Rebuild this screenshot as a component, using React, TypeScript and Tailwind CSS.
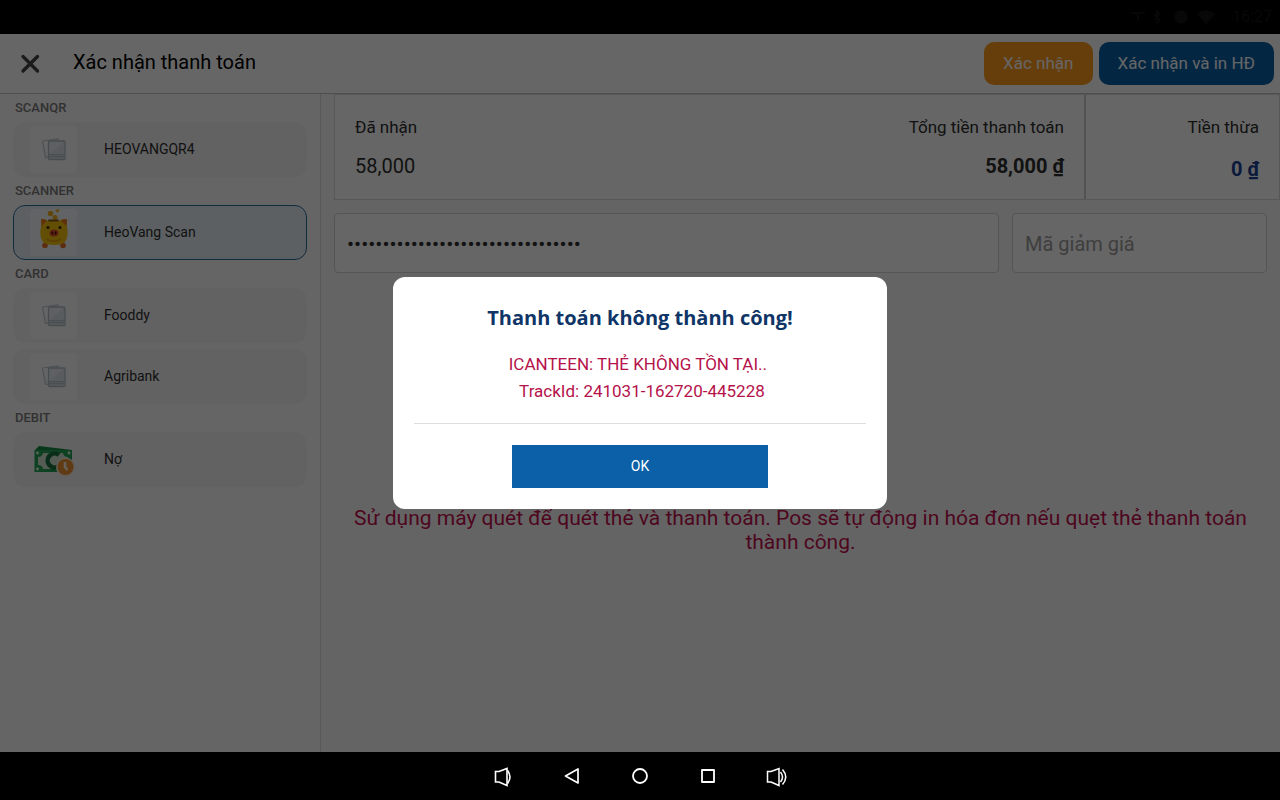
import { useState, type ReactNode } from "react";

function PhotoIcon() {
  return (
    <svg viewBox="0 0 47 47" className="size-[47px] rounded bg-[#fcfcfc]" aria-hidden="true">
      <path d="M12.500 15 28 13l.5 2M12.500 15l3 16.500 3-.5" fill="#f1f5f7" stroke="#c0cad1" strokeWidth="1.2" />
      <rect x="18.500" y="15" width="16.500" height="18.500" rx="1" fill="#dce5ea" stroke="#b2bec6" strokeWidth="1.3" />
      <path d="M19.500 28V16h14z" fill="#ebf1f4" />
      <path d="M19 28.500h15.500V33H19z" fill="#cfd9df" />
      <path d="M19 28.500h15.500M19 30.500h15.500" stroke="#b2bec6" strokeWidth=".8" />
    </svg>
  );
}

function PiggyIcon() {
  return (
    <svg viewBox="0 0 47 47" className="size-[47px] rounded bg-[#f4f8fb]" aria-hidden="true">
      <g fill="#f0b01c">
        <circle cx="20.500" cy="4.500" r="2.800" />
        <circle cx="25" cy="8.500" r="2.500" />
        <path d="m25 1 5-1-2.500 4z" />
      </g>
      <circle cx="15" cy="36.500" r="2.800" fill="#e8722c" />
      <circle cx="33" cy="36.500" r="2.800" fill="#e8722c" />
      <path d="M11 10.500c3-1 5 0 7 1.500h11c2-1.500 5-2.500 8-1.500v8c1.500 5 .5 11-2 14.500-4 4-18 4-22 0-2.500-3.500-3.500-9.500-2-14.500z" fill="#f8c20e" />
      <path d="M11 10.500c3-1 4 0 6 1.500l-5.500 5zM37 10.500c-3-1-4 0-6 1.500l5.500 5z" fill="#ee7e24" />
      <path d="M19 11.500h9" stroke="#8b5a10" strokeWidth="1.800" strokeLinecap="round" />
      <circle cx="18" cy="18.500" r="1.500" fill="#342408" />
      <circle cx="30" cy="18.500" r="1.500" fill="#342408" />
      <ellipse cx="24" cy="24" rx="4.500" ry="3.600" fill="#e9562b" />
      <ellipse cx="22.400" cy="24" rx="1" ry="1.700" fill="#4b1509" />
      <ellipse cx="25.600" cy="24" rx="1" ry="1.700" fill="#4b1509" />
      <path d="M17 30c3 3 11 3 14 0" fill="none" stroke="#e29a0c" strokeWidth="1.300" />
    </svg>
  );
}

function DebtIcon() {
  return (
    <svg viewBox="0 0 47 47" className="size-[47px]" aria-hidden="true">
      <path d="m5 14 4-4 33 4v8H5z" fill="#188a43" />
      <rect x="4.500" y="14" width="37.500" height="22" fill="#22a455" />
      <path d="M13 17h20a5 5 0 0 0 5 4v8a5 5 0 0 0-5 4H13a5 5 0 0 0-5-4v-8a5 5 0 0 0 5-4" fill="#cfe3cc" />
      <path d="M29 19a7 7 0 1 0 0 11" fill="none" stroke="#17703c" strokeWidth="4.500" />
      <g fill="#e9f2e6">
        <circle cx="7.500" cy="17" r="1.400" />
        <circle cx="39" cy="17" r="1.400" />
        <circle cx="7.500" cy="33" r="1.400" />
      </g>
      <circle cx="35.500" cy="31" r="9.500" fill="#f7eadc" />
      <circle cx="35.500" cy="31" r="8" fill="#ee9130" />
      <path d="M35 26v5l2.500 3" fill="none" stroke="#fdf3dc" strokeWidth="2.600" />
    </svg>
  );
}

type Method = { name: string; icon: ReactNode };

const groups: { title: string; methods: Method[] }[] = [
  { title: "SCANQR", methods: [{ name: "HEOVANGQR4", icon: <PhotoIcon /> }] },
  { title: "SCANNER", methods: [{ name: "HeoVang Scan", icon: <PiggyIcon /> }] },
  {
    title: "CARD",
    methods: [
      { name: "Fooddy", icon: <PhotoIcon /> },
      { name: "Agribank", icon: <PhotoIcon /> },
    ],
  },
  { title: "DEBIT", methods: [{ name: "Nợ", icon: <DebtIcon /> }] },
];

function StatusBar() {
  return (
    <div className="flex h-[34px] shrink-0 items-center justify-end gap-4 bg-black px-2 text-[#080808]">
      <svg viewBox="0 0 86 14" className="h-3.5 w-[86px]" fill="none" stroke="currentColor" strokeWidth="1.5" aria-hidden="true">
        <path d="M1 3h14M8 3v8M24 4l6 6-3 3V1l3 3-6 6" />
        <circle cx="51" cy="7" r="6" fill="currentColor" />
        <path d="M68 4q8-6 16 0l-8 9z" fill="currentColor" />
      </svg>
      <span className="text-[16px]">16:27</span>
    </div>
  );
}

function Header() {
  return (
    <header className="flex h-[60px] shrink-0 items-center border-b border-[#c4c4c4] bg-white pr-1.5 pl-5">
      <button type="button" aria-label="Đóng" className="mr-8 flex size-[21px] items-center justify-center">
        <svg viewBox="0 0 21 21" className="size-[21px]" stroke="#444444" strokeWidth="3.300" strokeLinecap="round" aria-hidden="true">
          <path d="m3 3.500 14.500 14.500M17.500 3.500 3 18" />
        </svg>
      </button>
      <h1 className="flex-1 pb-1 text-[20px] text-black">Xác nhận thanh toán</h1>
      <div className="flex gap-1.5 text-[17px] text-white">
        <button type="button" className="h-[43px] rounded-[10px] bg-[#ff9c1f] px-[19px]">
          Xác nhận
        </button>
        <button type="button" className="h-[43px] rounded-[10px] bg-[#0960a8] px-[19px]">
          Xác nhận và in HĐ
        </button>
      </div>
    </header>
  );
}

function Sidebar() {
  const [selected, setSelected] = useState("HeoVang Scan");
  return (
    <aside className="w-[321px] shrink-0 border-r border-[#dcdcdc] bg-[#fdfdfd] px-[13px]">
      {groups.map((group) => (
        <section key={group.title}>
          <h2 className="flex h-7 items-center pl-0.5 text-[13px] font-medium text-[#7b7b7b]">{group.title}</h2>
          <div className="flex flex-col gap-1.5">
            {group.methods.map((method) => (
              <button
                key={method.name}
                type="button"
                onClick={() => setSelected(method.name)}
                className={
                  method.name === selected
                    ? "flex h-[55px] items-center gap-[27px] rounded-xl border border-[#2a6f9e] bg-[#e6eff5] pl-4 text-left text-[14px] text-[#2f2f2f]"
                    : "flex h-[55px] items-center gap-[27px] rounded-xl border border-[#f4f4f4] bg-[#f4f4f4] pl-4 text-left text-[14px] text-[#2f2f2f]"
                }
              >
                {method.icon}
                {method.name}
              </button>
            ))}
          </div>
        </section>
      ))}
    </aside>
  );
}

function Payment() {
  return (
    <main className="flex min-w-0 flex-1 flex-col bg-[#fafafa] pl-[13px]">
      <div className="flex h-[106px] border border-[#dadada] bg-white text-[17px] text-[#2e2e2e]">
        <dl className="flex flex-1 justify-between px-5">
          <div className="pt-5">
            <dt className="leading-6">Đã nhận</dt>
            <dd className="mt-[15px] text-[20px] leading-6">58,000</dd>
          </div>
          <div className="pt-5 text-right">
            <dt className="leading-6">Tổng tiền thanh toán</dt>
            <dd className="mt-[15px] text-[20px] leading-6 font-bold">58,000 ₫</dd>
          </div>
        </dl>
        <dl className="w-[195px] border-l-2 border-[#d0d0d0] px-5 pt-5 text-right">
          <dt className="leading-6">Tiền thừa</dt>
          <dd className="mt-[18px] text-[20px] leading-6 font-bold text-[#1c3f94]">0 ₫</dd>
        </dl>
      </div>
      <div className="mt-[13px] flex gap-[13px] pr-[13px] text-[20px]">
        <input
          type="password"
          aria-label="Mã thẻ"
          defaultValue="241031162720445228241031162720445"
          className="h-[60px] min-w-0 flex-1 rounded-sm border border-[#d4d4d4] bg-white px-3 pt-0.5 text-[21px] text-[#2e2e2e]"
        />
        <input
          type="text"
          aria-label="Mã giảm giá"
          placeholder="Mã giảm giá"
          className="h-[60px] w-[255px] rounded-sm border border-[#d4d4d4] bg-white px-3 pt-0.5 placeholder:text-[#9c9c9c]"
        />
      </div>
      <div className="flex flex-1 items-center justify-center pt-[34px] pr-[13px]">
        <p className="text-center text-[21px] leading-6 text-[#c2104f]">
          Sử dụng máy quét để quét thẻ và thanh toán. Pos sẽ tự động in hóa đơn nếu quẹt thẻ thanh toán thành công.
        </p>
      </div>
    </main>
  );
}

function ResultDialog() {
  return (
    <div className="absolute inset-0 flex items-center justify-center bg-black/60">
      <div
        role="alertdialog"
        aria-labelledby="result-title"
        aria-describedby="result-message"
        className="flex w-[494px] flex-col items-center rounded-xl bg-white p-[21px]"
      >
        <h2 id="result-title" className="font-['Open_Sans',sans-serif] text-[20px] leading-10 font-bold text-[#0f3567]">
          Thanh toán không thành công!
        </h2>
        <p id="result-message" className="mt-[13px] text-center text-[17px] leading-[27px] whitespace-pre text-[#b5124a]">
          {"ICANTEEN: THẺ KHÔNG TỒN TẠI.. \n TrackId: 241031-162720-445228"}
        </p>
        <hr className="mt-[18px] w-full border-[#dedede]" />
        <button type="button" className="mt-[21px] h-[43px] w-64 bg-[#0c60a8] text-[14px] text-white">
          OK
        </button>
      </div>
    </div>
  );
}

function NavBar() {
  return (
    <nav className="flex h-12 shrink-0 items-center justify-center gap-11 bg-black text-white">
      <button type="button" aria-label="Giảm âm lượng">
        <svg viewBox="0 0 24 24" className="size-6" fill="none" stroke="currentColor" strokeWidth="1.600" aria-hidden="true">
          <path d="M3.500 7.500h3.500l8-3v17l-8-3.500H3.500z" />
          <path d="M15.500 6.500q5 6.500 0 13" />
        </svg>
      </button>
      <button type="button" aria-label="Quay lại">
        <svg viewBox="0 0 24 24" className="size-6" fill="none" stroke="currentColor" strokeWidth="1.700" strokeLinejoin="round" aria-hidden="true">
          <path d="M18 5v14L5.500 12z" />
        </svg>
      </button>
      <button type="button" aria-label="Màn hình chính">
        <svg viewBox="0 0 24 24" className="size-6" fill="none" stroke="currentColor" strokeWidth="1.800" aria-hidden="true">
          <circle cx="12" cy="12" r="7" />
        </svg>
      </button>
      <button type="button" aria-label="Ứng dụng gần đây">
        <svg viewBox="0 0 24 24" className="size-6" fill="none" stroke="currentColor" strokeWidth="1.800" strokeLinejoin="round" aria-hidden="true">
          <rect x="6" y="6" width="12" height="12" />
        </svg>
      </button>
      <button type="button" aria-label="Tăng âm lượng">
        <svg viewBox="0 0 24 24" className="size-6" fill="none" stroke="currentColor" strokeWidth="1.500" aria-hidden="true">
          <path d="M3.500 7.500h3.500l8-3v17l-8-3.500H3.500z" />
          <path d="M16.500 8q4 5 0 10M18.500 5.500q6.500 7.500 0 15" />
        </svg>
      </button>
    </nav>
  );
}

export default function App() {
  return (
    <div className="flex min-h-screen flex-col bg-black font-[Roboto,sans-serif]">
      <StatusBar />
      <div className="relative flex flex-1 flex-col">
        <Header />
        <div className="flex flex-1">
          <Sidebar />
          <Payment />
        </div>
        <ResultDialog />
      </div>
      <NavBar />
    </div>
  );
}
